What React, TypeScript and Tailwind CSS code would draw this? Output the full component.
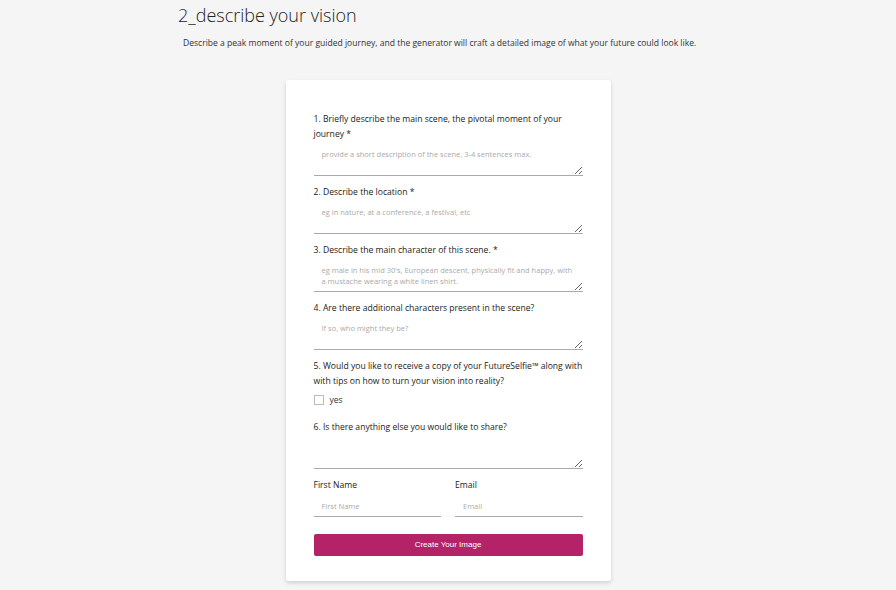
import React from "react";

const font = { fontFamily: '"Open Sans", "Noto Sans", sans-serif' };

function Label({ children }: { children: React.ReactNode }) {
  return (
    <div className="text-[8.6px] leading-[15px] font-medium text-[#222] mb-[2px]">{children}</div>
  );
}

function Area({ placeholder }: { placeholder?: string }) {
  return (
    <textarea
      placeholder={placeholder}
      className="block w-full h-[32px] pt-[5px] px-2 text-[7.5px] leading-[11px] border-0 border-b border-[#aaa] outline-none bg-white placeholder:text-[#aaa] text-[#333] resize-y"
    />
  );
}

export default function App() {
  return (
    <div className="min-h-[590px] bg-[#f5f5f5] flex flex-col items-center" style={font}>
      <div className="w-[540px]">
        <h1 className="text-[18px] leading-[22px] font-light text-[#222] pt-[4px]">2_describe your vision</h1>
        <p className="text-[8.55px] leading-[12px] text-[#333] mt-[11px] ml-[5px] whitespace-nowrap">
          Describe a peak moment of your guided journey, and the generator will craft a detailed image of what your future could look like.
        </p>
      </div>
      <div className="mt-[31px] w-[325px] bg-white rounded-[3px] shadow-[0_2px_4px_rgba(0,0,0,0.15)] pt-[32px] pb-[25px] px-[28px]">
        <div className="mb-[9px]">
          <Label>1. Briefly describe the main scene, the pivotal moment of your journey *</Label>
          <Area placeholder="provide a short description of the scene, 3-4 sentences max." />
        </div>
        <div className="mb-[9px]">
          <Label>2. Describe the location *</Label>
          <Area placeholder="eg in nature, at a conference, a festival, etc" />
        </div>
        <div className="mb-[9px]">
          <Label>3. Describe the main character of this scene. *</Label>
          <Area placeholder="eg male in his mid 30's, European descent, physically fit and happy, with a mustache wearing a white linen shirt." />
        </div>
        <div className="mb-[9px]">
          <Label>4. Are there additional characters present in the scene?</Label>
          <Area placeholder="If so, who might they be?" />
        </div>
        <div className="mb-[14px]">
          <Label>5. Would you like to receive a copy of your FutureSelfie™ along with with tips on how to turn your vision into reality?</Label>
          <label className="flex items-center gap-[6px] mt-[5px]">
            <span className="w-[10px] h-[10px] border border-[#bbb] bg-white inline-block" />
            <span className="text-[8.5px] leading-[12px] text-[#333]">yes</span>
          </label>
        </div>
        <div className="mb-[9px]">
          <Label>6. Is there anything else you would like to share?</Label>
          <Area />
        </div>
        <div className="grid grid-cols-2 gap-[14px]">
          <div>
            <Label>First Name</Label>
            <input placeholder="First Name" className="block w-full h-[22px] px-2 text-[7.5px] border-0 border-b border-[#aaa] outline-none placeholder:text-[#aaa]" />
          </div>
          <div>
            <Label>Email</Label>
            <input placeholder="Email" className="block w-full h-[22px] px-2 text-[7.5px] border-0 border-b border-[#aaa] outline-none placeholder:text-[#aaa]" />
          </div>
        </div>
        <button
          className="mt-[17px] w-full h-[22px] rounded-[2px] bg-[#b42268] text-white text-[8px]"
          style={{ fontFamily: '"Liberation Sans", Arial, sans-serif' }}
        >
          Create Your Image
        </button>
      </div>
    </div>
  );
}
